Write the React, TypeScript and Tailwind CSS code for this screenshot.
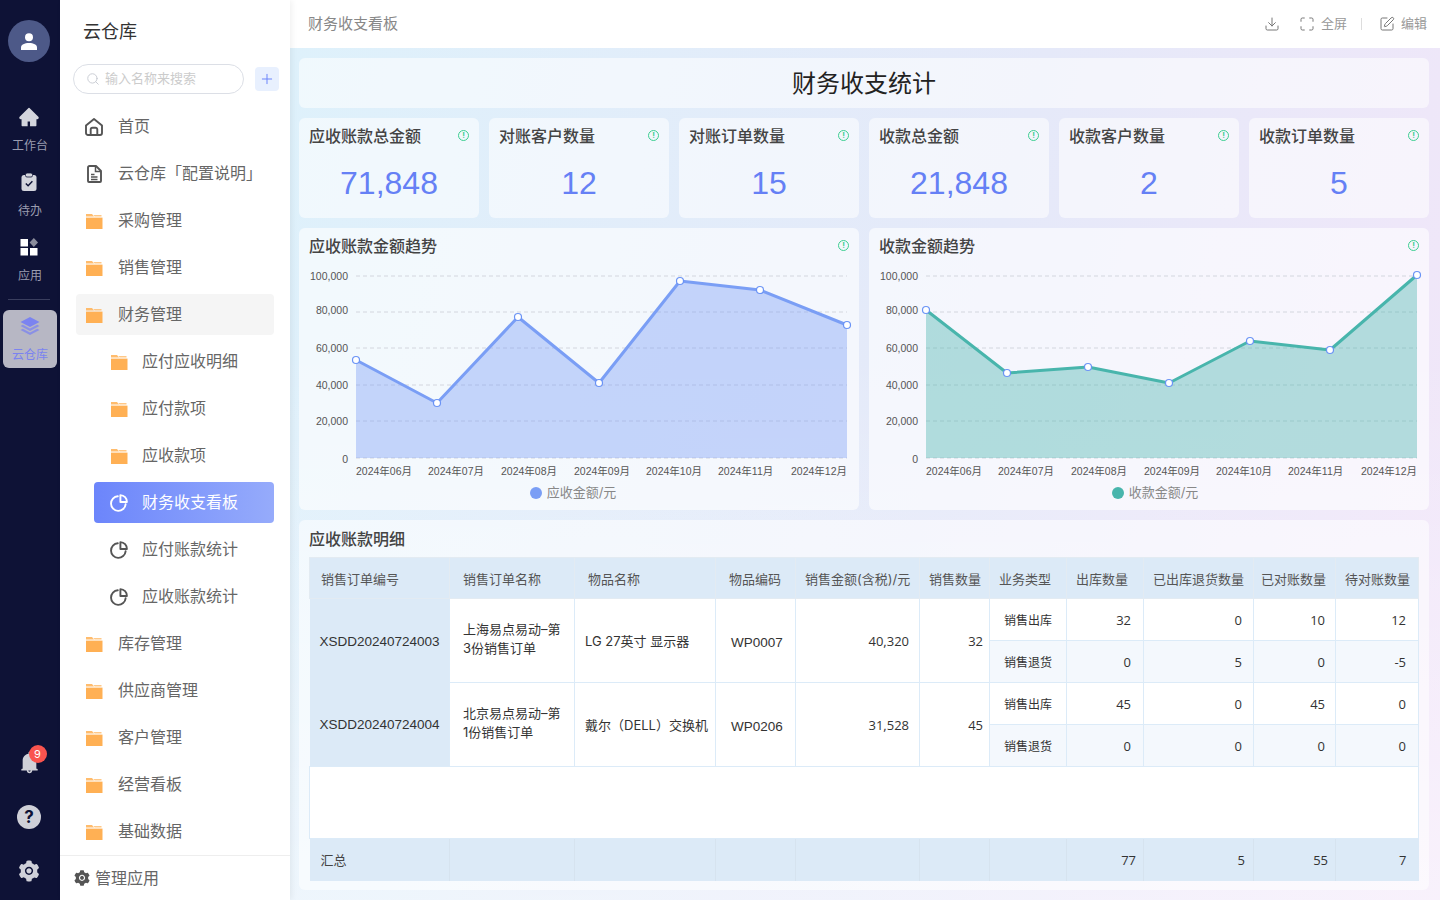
import { Download, Maximize, Search, SquarePen, Plus } from "lucide-react";
import { AiFillBell, AiFillHome, AiFillSetting } from "react-icons/ai";

const FOLDER = "#ffb054";

function FolderIcon() {
  return (
    <svg width="18" height="16" viewBox="0 0 18 16" className="shrink-0">
      <path d="M1 1h6l2 2.400H1z" fill={FOLDER} opacity="0.85" />
      <path d="M1 4.600h16.500V16H1z" fill={FOLDER} />
      <path d="M8.500 2h8v1.400h-7z" fill={FOLDER} opacity="0.7" />
    </svg>
  );
}

function PieIcon({ color }: { color: string }) {
  return (
    <svg width="18" height="18" viewBox="0 0 18 18" fill="none" stroke={color} strokeWidth="1.900" className="shrink-0">
      <path d="M7.800 2.300a7.300 7.300 0 1 0 7.800 8" strokeLinecap="round" />
      <path d="M10.400 1.100a6.700 6.700 0 0 1 6.500 6.900h-6.500z" strokeLinejoin="round" />
    </svg>
  );
}

function HomeOutline() {
  return (
    <svg width="18" height="18" viewBox="0 0 18 18" fill="none" stroke="#555" strokeWidth="1.900" className="shrink-0">
      <path d="M1 7.500 9 1l8 6.500V15a2 2 0 0 1-2 2H3a2 2 0 0 1-2-2z" strokeLinejoin="round" />
      <path d="M5.700 17v-5.500a1.800 1.800 0 0 1 1.800-1.800h3a1.800 1.800 0 0 1 1.800 1.800V17" />
    </svg>
  );
}

function DocIcon() {
  return (
    <svg width="18" height="18" viewBox="0 0 18 18" fill="none" stroke="#555" strokeWidth="1.900" className="shrink-0">
      <path d="M3 2.500A1.500 1.500 0 0 1 4.500 1H11l5 5v10a1 1 0 0 1-1 1H4a1 1 0 0 1-1-1z" strokeLinejoin="round" />
      <path d="M10.500 1.500V6.500H16M6 9.500h3.500M6 12h6.500M6 14.500h6.500" strokeWidth="1.500" />
    </svg>
  );
}

function ClipboardIcon() {
  return (
    <svg width="16" height="18" viewBox="0 0 16 18">
      <rect x="0.500" y="2" width="15" height="16" rx="2.500" fill="#d4d5dd" />
      <rect x="4.500" y="0" width="7" height="4" rx="1.500" fill="#d4d5dd" stroke="#0e1236" strokeWidth="0.800" />
      <path d="m4.800 10.500 2.300 2.300 4.300-4.600" fill="none" stroke="#0e1236" strokeWidth="1.400" />
    </svg>
  );
}

function AppsIcon() {
  return (
    <svg width="18" height="18" viewBox="0 0 18 18">
      <rect x="0.500" y="1" width="7.500" height="7.500" fill="#fff" />
      <rect x="0.500" y="10" width="7.500" height="7.500" fill="#fff" />
      <rect x="10" y="10" width="7.500" height="7.500" fill="#fff" />
      <path d="m13.800 0 4.200 4.500-4.200 4.500-4.200-4.500z" fill="#8b8d9c" />
    </svg>
  );
}

function LayersIcon() {
  return (
    <svg width="20" height="18" viewBox="0 0 20 18" fill="#7b83f0">
      <path d="m10 0 9.500 5L10 10 .5 5z" />
      <path d="m2.800 7.800 7.200 3.800 7.200-3.800 2.300 1.200L10 14 .5 9z" opacity="0.75" />
      <path d="m2.800 11.800 7.200 3.800 7.200-3.800 2.300 1.200L10 18 .5 13z" opacity="0.75" />
    </svg>
  );
}

function InfoDot() {
  return (
    <span className="mb-[2px] flex h-[11px] w-[11px] items-center justify-center rounded-full border border-[#3ccf91] text-[8px] leading-none font-bold text-[#3ccf91]">
      !
    </span>
  );
}

function RailItem({ icon, label }: { icon: React.ReactNode; label: string }) {
  return (
    <div className="flex h-[62px] flex-col items-center pt-[2px]">
      <div className="flex h-5 items-center justify-center pr-[2px] pb-[2px]">{icon}</div>
      <div className="mt-[10px] text-xs leading-4 text-[#9a9cb0]">{label}</div>
    </div>
  );
}

function Rail() {
  return (
    <aside className="flex h-full w-[60px] shrink-0 flex-col items-center bg-[#0e1236] pt-5 pb-[17px]">
      <div className="mr-[2px] flex h-[42px] w-[42px] items-center justify-center rounded-full bg-[#4d5988]">
        <svg width="18" height="17" viewBox="0 0 18 17" fill="#fff">
          <circle cx="9" cy="4.200" r="4" />
          <path d="M1 17v-2.500C1 11.500 4.500 10 9 10s8 1.500 8 4.500V17z" />
        </svg>
      </div>
      <div className="mt-[44px] flex w-full flex-col gap-[3px]">
        <RailItem icon={<AiFillHome size={22} color="#d4d5dd" />} label="工作台" />
        <RailItem icon={<ClipboardIcon />} label="待办" />
        <RailItem icon={<AppsIcon />} label="应用" />
      </div>
      <div className="mt-px mr-[2px] h-px w-[42px] bg-[#3a3e5e]" />
      <div className="mt-[10px] flex h-[58px] w-[54px] flex-col items-center rounded-md bg-[#b7b7c4] pt-[7px]">
        <LayersIcon />
        <div className="mt-[12px] text-xs leading-4 text-[#7b83f0]">云仓库</div>
      </div>
      <div className="mt-auto mr-[2px] flex flex-col items-center gap-[30px]">
        <div className="relative">
          <AiFillBell size={25} color="#cfd0d8" />
          <span className="absolute -top-[5px] left-[12px] flex h-[18px] w-[18px] items-center justify-center rounded-full bg-[#f9544f] text-[11px] leading-none text-white">
            9
          </span>
        </div>
        <div className="flex h-6 w-6 items-center justify-center rounded-full bg-[#cfd0d8] text-[17px] leading-none font-bold text-[#0e1236]">
          ?
        </div>
        <AiFillSetting size={24} color="#cfd0d8" />
      </div>
    </aside>
  );
}

type MenuEntry = { label: string; child?: boolean; kind?: "home" | "doc" | "pie"; open?: boolean; active?: boolean };

const MENU: MenuEntry[] = [
  { label: "首页", kind: "home" },
  { label: "云仓库「配置说明」", kind: "doc" },
  { label: "采购管理" },
  { label: "销售管理" },
  { label: "财务管理", open: true },
  { label: "应付应收明细", child: true },
  { label: "应付款项", child: true },
  { label: "应收款项", child: true },
  { label: "财务收支看板", child: true, kind: "pie", active: true },
  { label: "应付账款统计", child: true, kind: "pie" },
  { label: "应收账款统计", child: true, kind: "pie" },
  { label: "库存管理" },
  { label: "供应商管理" },
  { label: "客户管理" },
  { label: "经营看板" },
  { label: "基础数据" },
];

function MenuRow({ item }: { item: MenuEntry }) {
  let icon = <FolderIcon />;
  if (item.kind === "home") icon = <HomeOutline />;
  if (item.kind === "doc") icon = <DocIcon />;
  if (item.kind === "pie") icon = <PieIcon color={item.active ? "#fff" : "#555"} />;

  if (item.child) {
    return (
      <div
        className={
          item.active
            ? "ml-[18px] flex h-[41px] items-center gap-[14px] rounded bg-gradient-to-r from-[#6c85fb] to-[#96abfb] pl-4 text-base whitespace-nowrap text-white"
            : "ml-[18px] flex h-[41px] items-center gap-[14px] rounded pl-4 text-base whitespace-nowrap text-[#666]"
        }
      >
        {icon}
        <span className="pb-[2px]">{item.label}</span>
      </div>
    );
  }
  return (
    <div
      className={
        item.open
          ? "flex h-[41px] items-center gap-[15px] rounded bg-[#f5f5f5] pl-[9px] text-base whitespace-nowrap text-[#666]"
          : "flex h-[41px] items-center gap-[15px] rounded pl-[9px] text-base whitespace-nowrap text-[#666]"
      }
    >
      {icon}
      <span className="pb-[2px]">{item.label}</span>
    </div>
  );
}

function Sidebar() {
  return (
    <aside className="z-10 flex h-full w-[230px] shrink-0 flex-col bg-white shadow-[2px_0_6px_rgba(0,0,0,0.06)]">
      <div className="pt-[19px] pl-[23px] text-lg leading-[26px] text-[#333]">云仓库</div>
      <div className="mt-[19px] flex items-center pl-[13px]">
        <div className="flex h-[30px] w-[171px] items-center gap-[5px] rounded-full border border-[#dcdfe6] pl-3 text-[13px] text-[#ccc]">
          <Search size={14} color="#c4c7cf" strokeWidth={1.500} />
          <span>输入名称来搜索</span>
        </div>
        <div className="ml-[11px] flex h-6 w-6 items-center justify-center rounded bg-[#e8f0fe]">
          <Plus size={16} color="#6c85fb" strokeWidth={1.500} />
        </div>
      </div>
      <nav className="mt-3 flex flex-1 flex-col gap-[6px] pr-4 pl-4">
        {MENU.map((item) => (
          <MenuRow key={item.label} item={item} />
        ))}
      </nav>
      <div className="flex h-[45px] items-center gap-1 border-t border-[#eee] pl-[13px] text-base text-[#666]">
        <AiFillSetting size={18} color="#555" />
        <span>管理应用</span>
      </div>
    </aside>
  );
}

const STATS = [
  { title: "应收账款总金额", value: "71,848" },
  { title: "对账客户数量", value: "12" },
  { title: "对账订单数量", value: "15" },
  { title: "收款总金额", value: "21,848" },
  { title: "收款客户数量", value: "2" },
  { title: "收款订单数量", value: "5" },
];

function StatCard({ title, value }: { title: string; value: string }) {
  return (
    <div className="flex flex-col rounded-md bg-white/55 px-[10px] pt-[6px]">
      <div className="flex h-6 items-center justify-between">
        <span className="text-base font-medium text-[#444]">{title}</span>
        <InfoDot />
      </div>
      <div className="mt-[10px] text-center text-[32px] leading-[50px] text-[#6580f5] [font-family:'Liberation_Sans',sans-serif]">
        {value}
      </div>
    </div>
  );
}

const XS = [57, 138, 219, 300, 381, 461, 548];
const MONTHS = ["2024年06月", "2024年07月", "2024年08月", "2024年09月", "2024年10月", "2024年11月", "2024年12月"];
const MONTH_X = [57, 129, 202, 275, 347, 419, 492];
const TICKS = [
  { label: "100,000", grid: 10, text: 10 },
  { label: "80,000", grid: 46, text: 44 },
  { label: "60,000", grid: 82, text: 82 },
  { label: "40,000", grid: 119, text: 119 },
  { label: "20,000", grid: 155, text: 155 },
  { label: "0", grid: 192, text: 193 },
];

function TrendChart({
  title,
  legend,
  ys,
  color,
  legendClass,
}: {
  title: string;
  legend: string;
  ys: number[];
  color: string;
  legendClass: string;
}) {
  const line = XS.map((x, i) => `${x},${ys[i]}`).join(" ");
  return (
    <div className="flex flex-col rounded-md bg-white/60">
      <div className="flex h-[36px] shrink-0 items-center justify-between pr-[10px] pl-[10px]">
        <span className="text-base font-medium text-[#444]">{title}</span>
        <InfoDot />
      </div>
      <svg width="560" height="214" viewBox="0 0 560 214" className="mt-[2px] block shrink-0 overflow-visible [font-family:'Liberation_Sans','Noto_Sans_CJK_SC',sans-serif]">
        {TICKS.map((t) => (
          <g key={t.label}>
            <line x1="57" x2="548" y1={t.grid} y2={t.grid} stroke="#d3d6de" strokeDasharray="4 3" />
            <text x="49" y={t.text + 4} textAnchor="end" fontSize="10.500" fill="#555">
              {t.label}
            </text>
          </g>
        ))}
        <polygon points={`57,192 ${line} 548,192`} fill={color} fillOpacity="0.4" />
        <polyline points={line} fill="none" stroke={color} strokeWidth="3" strokeLinejoin="round" />
        {XS.map((x, i) => (
          <circle key={x} cx={x} cy={ys[i]} r="3.500" fill="#fff" stroke="#6a93f5" strokeWidth="1.200" />
        ))}
        {MONTHS.map((m, i) => (
          <text key={m} x={MONTH_X[i]} y="209" fontSize="10.500" fill="#555">
            {m}
          </text>
        ))}
      </svg>
      <div className={legendClass}>
        <span className="h-3 w-3 rounded-full" style={{ backgroundColor: color }} />
        <span>{legend}</span>
      </div>
    </div>
  );
}

const WIDTHS = [140, 125, 141, 80, 124, 70, 77, 77, 110, 82, 83];
const HEADERS = [
  { label: "销售订单编号", cls: "pl-[11px]" },
  { label: "销售订单名称", cls: "pl-[13px]" },
  { label: "物品名称", cls: "pl-[13px]" },
  { label: "物品编码", cls: "pl-[13px]" },
  { label: "销售金额(含税)/元", cls: "pl-[9px]" },
  { label: "销售数量", cls: "pl-[9px]" },
  { label: "业务类型", cls: "pl-[9px]" },
  { label: "出库数量", cls: "pl-[9px]" },
  { label: "已出库退货数量", cls: "pl-[9px]" },
  { label: "已对账数量", cls: "pl-[7px]" },
  { label: "待对账数量", cls: "pl-[9px]" },
];

const ORDERS = [
  {
    no: "XSDD20240724003",
    name: "上海易点易动–第3份销售订单",
    item: "LG 27英寸 显示器",
    code: "WP0007",
    amount: "40,320",
    qty: "32",
    out: ["32", "0", "10", "12"],
    back: ["0", "5", "0", "-5"],
  },
  {
    no: "XSDD20240724004",
    name: "北京易点易动–第1份销售订单",
    item: "戴尔（DELL）交换机",
    code: "WP0206",
    amount: "31,528",
    qty: "45",
    out: ["45", "0", "45", "0"],
    back: ["0", "0", "0", "0"],
  },
];

const CELL = "border border-[#dcebf8]";
const NUM_PAD = ["pr-3", "pr-[11px]", "pr-[10px]", "pr-3"];
const NUM = "text-right text-[13px] text-[#333] [font-family:'Open_Sans','Noto_Sans_CJK_SC',sans-serif]";

function NumCells({ values, tint }: { values: string[]; tint?: boolean }) {
  return (
    <>
      {values.map((v, i) => (
        <td key={i} className={`${CELL} ${NUM} pt-[2px] ${NUM_PAD[i]} ${tint ? "bg-[#f4f8fd]" : ""}`}>
          {v}
        </td>
      ))}
    </>
  );
}

function DetailTable() {
  return (
    <table className="w-[1109px] table-fixed border-collapse text-[#333]">
      <colgroup>
        {WIDTHS.map((w, i) => (
          <col key={i} style={{ width: w }} />
        ))}
      </colgroup>
      <thead>
        <tr className="h-[41px] bg-[#dceaf7] text-left">
          {HEADERS.map((h) => (
            <th key={h.label} className={`border border-[#e3ebf2] pt-1 text-[13px] font-normal whitespace-nowrap text-[#555] ${h.cls}`}>
              {h.label}
            </th>
          ))}
        </tr>
      </thead>
      <tbody className="bg-white">
        {ORDERS.map((o) => (
          <>
            <tr key={o.no} className="h-[42px]">
              <td rowSpan={2} className="bg-[#dceaf7] pt-[2px] pl-[10px] text-[13.500px] whitespace-nowrap [font-family:'Liberation_Sans',sans-serif]">
                {o.no}
              </td>
              <td rowSpan={2} className={`${CELL} px-[13px] pb-[3px] text-[13px] leading-[19px]`}>
                {o.name}
              </td>
              <td rowSpan={2} className={`${CELL} pt-[3px] pl-[10px] text-[13px] whitespace-nowrap`}>
                {o.item}
              </td>
              <td rowSpan={2} className={`${CELL} pt-[5px] pl-[15px] text-[13.500px] [font-family:'Liberation_Sans',sans-serif]`}>
                {o.code}
              </td>
              <td rowSpan={2} className={`${CELL} ${NUM} pt-[3px] pr-[10px]`}>
                {o.amount}
              </td>
              <td rowSpan={2} className={`${CELL} ${NUM} pt-[2px] pr-[6px]`}>
                {o.qty}
              </td>
              <td className={`${CELL} pt-[2px] text-center text-xs`}>销售出库</td>
              <NumCells values={o.out} />
            </tr>
            <tr key={`${o.no}-back`} className="h-[42px]">
              <td className={`${CELL} bg-[#f4f8fd] pt-[2px] text-center text-xs`}>销售退货</td>
              <NumCells values={o.back} tint />
            </tr>
          </>
        ))}
        <tr className="h-[72px]">
          <td colSpan={11} className={CELL} />
        </tr>
      </tbody>
      <tfoot>
        <tr className="h-[42px] bg-[#dceaf7] text-[13px] text-[#444]">
          <td className="pt-[2px] pl-[11px]">汇总</td>
          {[0, 1, 2, 3, 4, 5].map((i) => (
            <td key={i} className="border-l border-[#d6e3ef]" />
          ))}
          <td className={`border-l border-[#d6e3ef] pt-[2px] ${NUM} pr-[7px]`}>77</td>
          <td className={`border-l border-[#d6e3ef] pt-[2px] ${NUM} pr-2`}>5</td>
          <td className={`border-l border-[#d6e3ef] pt-[2px] ${NUM} pr-[7px]`}>55</td>
          <td className={`border-l border-[#d6e3ef] pt-[2px] ${NUM} pr-3`}>7</td>
        </tr>
      </tfoot>
    </table>
  );
}

export default function App() {
  return (
    <div className="flex h-screen w-full overflow-hidden [font-family:'Inter','Noto_Sans_CJK_SC',sans-serif]">
      <Rail />
      <Sidebar />
      <main className="flex min-w-0 flex-1 flex-col">
        <header className="flex h-12 shrink-0 items-center justify-between bg-white pr-[13px] pl-[18px]">
          <span className="text-[15px] text-[#888]">财务收支看板</span>
          <div className="flex items-center text-[13px] text-[#999]">
            <Download size={16} color="#777" strokeWidth={1.500} />
            <Maximize size={16} color="#777" strokeWidth={1.500} className="ml-[19px]" />
            <span className="ml-[6px]">全屏</span>
            <span className="mx-[14px] h-3 w-px bg-[#ddd]" />
            <SquarePen size={16} color="#777" strokeWidth={1.500} className="ml-[3px]" />
            <span className="ml-[6px]">编辑</span>
          </div>
        </header>
        <div className="flex flex-1 flex-col gap-[10px] bg-[linear-gradient(to_bottom,rgba(255,255,255,0)_35%,rgba(255,255,255,0.45)_100%),linear-gradient(105deg,#def1fb_0%,#e5e9f9_55%,#f3e6f9_100%)] pt-[10px] pr-[11px] pl-[9px]">
          <div className="flex h-[50px] items-center justify-center rounded-md bg-white/55 pt-[2px] text-2xl text-[#222]">
            财务收支统计
          </div>
          <div className="grid h-[100px] grid-cols-6 gap-[10px]">
            {STATS.map((s) => (
              <StatCard key={s.title} title={s.title} value={s.value} />
            ))}
          </div>
          <div className="grid h-[282px] grid-cols-2 gap-[10px]">
            <TrendChart
              title="应收账款金额趋势"
              legend="应收金额/元"
              ys={[94, 137, 51, 117, 15, 24, 59]}
              color="#7a9ef5"
              legendClass="mr-3 flex h-[26px] items-center justify-center gap-[5px] text-[13px] text-[#888]"
            />
            <TrendChart
              title="收款金额趋势"
              legend="收款金额/元"
              ys={[44, 107, 101, 117, 75, 84, 9]}
              color="#48b5ac"
              legendClass="ml-3 flex h-[26px] items-center justify-center gap-[5px] text-[13px] text-[#888]"
            />
          </div>
          <div className="flex h-[370px] flex-col rounded-md bg-white/55 px-[10px]">
            <div className="flex h-[37px] shrink-0 items-center text-base font-medium text-[#444]">应收账款明细</div>
            <DetailTable />
          </div>
        </div>
      </main>
    </div>
  );
}
